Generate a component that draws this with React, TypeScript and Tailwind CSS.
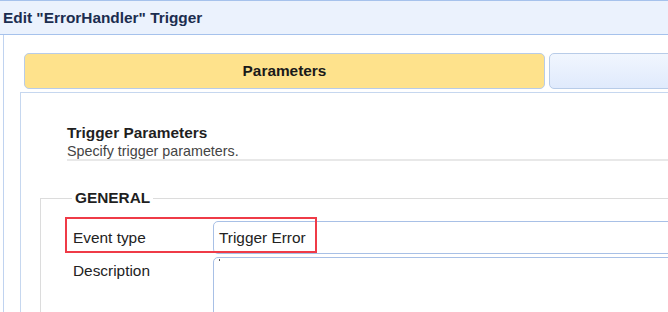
import React from 'react';

export default function App() {
  return (
    <div className="relative h-[312px] w-[668px] overflow-hidden bg-white font-['Liberation_Sans',Arial,sans-serif] text-[#222]">
      {/* Window header */}
      <div className="flex h-[35px] items-center border-t border-b border-[#a6c2ec] bg-[#ebf2fd] pl-[3px]">
        <span className="text-[15.4px] font-bold leading-[18px] text-[#1b2d4f]">Edit "ErrorHandler" Trigger</span>
      </div>

      {/* Dialog body */}
      <div className="ml-[3px] h-[300px] w-[800px] border-l border-[#c0d3f0]">
        {/* Tabs */}
        <div className="flex gap-[4px] pl-[20px] pt-[18px]">
          <div className="flex h-[36px] w-[521px] items-center justify-center rounded-[5px] border border-[#b8cce8] bg-[#fee28c] text-[15.4px] font-bold text-[#1a1a1a]">
            Parameters
          </div>
          <div className="h-[36px] w-[240px] rounded-[5px] border border-[#b8cce8] bg-gradient-to-b from-[#f1f6fe] to-[#e0eafc]" />
        </div>

        {/* Tab panel */}
        <div className="ml-[16px] mt-[3px] h-[240px] border-l border-t border-[#c6d7ef] pt-[31px]">
          <div className="ml-[46px] w-[700px] border-b-2 border-[#e8e8e8]">
            <div className="text-[15.4px] font-bold leading-[18px] text-[#1f1f1f]">Trigger Parameters</div>
            <div className="mt-[1px] text-[14.3px] leading-[16px] text-[#444]">Specify trigger parameters.</div>
          </div>

          <fieldset className="ml-[19px] mt-[28px] w-[700px] border-l border-t border-[#dcdcdc]">
            <legend className="ml-[31px] px-[3px] text-[15.4px] font-bold leading-[18px] text-[#1f1f1f]">GENERAL</legend>

            {/* Event type row */}
            <div className="relative mt-[14px] flex h-[33px] items-center">
              <div className="ml-[32px] w-[140px] text-[15.4px] leading-[18px]">Event type</div>
              <div className="flex h-[33px] flex-1 items-center rounded-[5px] border border-[#a8c0e6] pl-[5px] text-[15.4px]">
                Trigger Error
              </div>
              {/* highlight annotation */}
              <div className="absolute left-[24px] top-[-4px] z-10 h-[36px] w-[252px] border-2 border-[#ef3b47]" />
            </div>

            {/* Description row */}
            <div className="mt-[3px] flex items-start">
              <div className="ml-[32px] w-[140px] pt-[5px] text-[15.4px] leading-[18px]">Description</div>
              <div className="relative h-[80px] flex-1 rounded-[5px] border border-[#a8c0e6]">
                <span className="absolute left-[5px] top-[1px] h-[2px] w-[1px] bg-[#555]" />
              </div>
            </div>
          </fieldset>
        </div>
      </div>
    </div>
  );
}
